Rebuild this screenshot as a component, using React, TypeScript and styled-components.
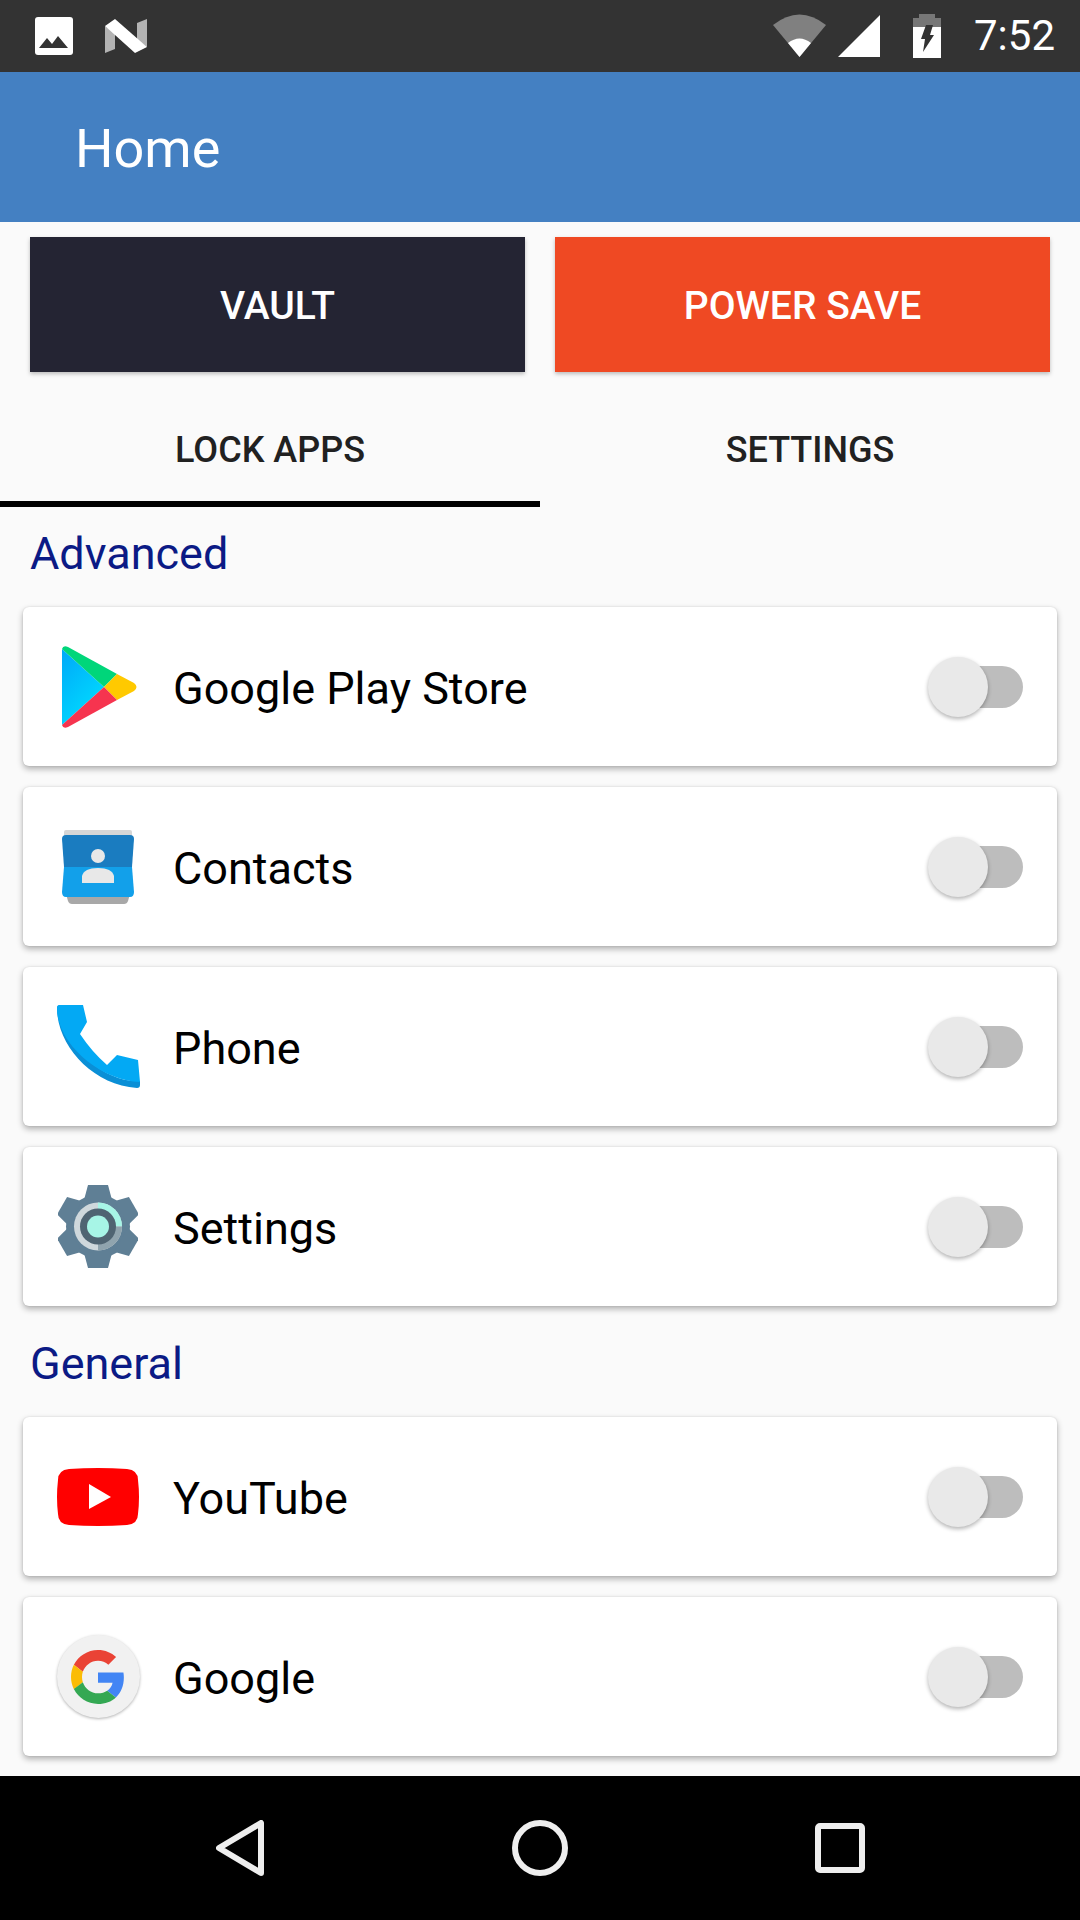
import React from "react";
import styled, { createGlobalStyle } from "styled-components";

const GlobalStyle = createGlobalStyle`
  html, body {
    margin: 0;
    padding: 0;
    background: #fafafa;
    font-family: Roboto, "Liberation Sans", sans-serif;
  }
`;

const Page = styled.div`
  width: 1080px;
  height: 1920px;
  display: flex;
  flex-direction: column;
  overflow: hidden;
  background: #fafafa;
`;

const StatusBar = styled.div`
  height: 72px;
  flex: none;
  display: flex;
  align-items: center;
  justify-content: space-between;
  padding: 0 25px 0 35px;
  background: #333333;
`;

const StatusGroup = styled.div<{ $gap: number }>`
  display: flex;
  align-items: center;
  gap: ${(props) => props.$gap}px;
`;

const Clock = styled.span`
  color: #fff;
  font-size: 42px;
  line-height: 72px;
`;

const AppBar = styled.div`
  height: 150px;
  flex: none;
  display: flex;
  align-items: center;
  padding: 3px 0 0 75px;
  box-sizing: border-box;
  background: #4480c2;
`;

const AppTitle = styled.h1`
  margin: 0;
  color: #fff;
  font-size: 54px;
  font-weight: 400;
`;

const ActionRow = styled.div`
  display: grid;
  grid-template-columns: 1fr 1fr;
  gap: 30px;
  padding: 15px 30px 0;
`;

const ActionButton = styled.div<{ $bg: string }>`
  height: 135px;
  display: flex;
  align-items: center;
  justify-content: center;
  padding-top: 3px;
  box-sizing: border-box;
  color: #fff;
  font-size: 39px;
  font-weight: 500;
  background: ${(props) => props.$bg};
  box-shadow: 0 2px 4px rgba(0, 0, 0, 0.25);
`;

const Tabs = styled.div`
  display: grid;
  grid-template-columns: 1fr 1fr;
  height: 135px;
`;

const Tab = styled.div<{ $active?: boolean }>`
  display: flex;
  align-items: center;
  justify-content: center;
  padding-top: 27px;
  color: #212121;
  font-size: 36px;
  font-weight: 500;
  border-bottom: 6px solid ${(props) => (props.$active ? "#000" : "transparent")};
`;

const Section = styled.section`
  padding: 0 23px;
  & + & {
    margin-top: 11px;
  }
`;

const SectionTitle = styled.h2`
  margin: 0 0 8px 7px;
  height: 92px;
  line-height: 94px;
  color: #0b1a85;
  font-size: 45px;
  font-weight: 400;
`;

const CardList = styled.div`
  display: flex;
  flex-direction: column;
  gap: 21px;
`;

const Card = styled.div`
  height: 159px;
  display: flex;
  align-items: center;
  padding: 0 34px 0 33px;
  border-radius: 6px;
  background: #fff;
  box-shadow: 0 3px 6px rgba(0, 0, 0, 0.3), 0 0 2px rgba(0, 0, 0, 0.12);
`;

const IconSlot = styled.div`
  width: 84px;
  height: 86px;
  flex: none;
  display: flex;
  align-items: center;
  justify-content: center;
`;

const AppName = styled.span`
  flex: 1;
  margin-left: 33px;
  padding-top: 4px;
  color: #000;
  font-size: 45px;
`;

const Switch = styled.div`
  position: relative;
  width: 95px;
  height: 60px;
  display: flex;
  align-items: center;
  justify-content: flex-end;
`;

const Track = styled.div`
  width: 73px;
  height: 42px;
  border-radius: 21px;
  background: #bdbdbd;
`;

const Thumb = styled.div`
  position: absolute;
  top: 0;
  left: 0;
  width: 60px;
  height: 60px;
  border-radius: 50%;
  background: #e9e9e9;
  box-shadow: 0 2px 4px rgba(0, 0, 0, 0.3);
`;

const NavBar = styled.div`
  margin-top: auto;
  height: 144px;
  flex: none;
  display: grid;
  grid-template-columns: repeat(3, 300px);
  justify-content: center;
  align-items: center;
  background: #000;
`;

const NavItem = styled.div`
  display: flex;
  justify-content: center;
  align-items: center;
`;

const GoogleBadge = styled.div`
  width: 83px;
  height: 83px;
  display: flex;
  align-items: center;
  justify-content: center;
  border-radius: 50%;
  background: #f1f1f1;
  box-shadow: 0 1px 3px rgba(0, 0, 0, 0.3);
`;

const PictureIcon = () => (
  <svg width="38" height="38" viewBox="0 0 38 38">
    <rect width="38" height="38" rx="3" fill="#fff" />
    <path d="M4 31 L12 21 L17 27 L23 19 L33 31Z" fill="#333" />
  </svg>
);

const NougatLogo = () => (
  <svg width="44" height="36" viewBox="0 0 44 36">
    <path d="M1 8 L11 15 V31 L1 35Z" fill="#b3b3b3" />
    <path d="M43 1 V29 L33 22 V5Z" fill="#b3b3b3" />
    <path d="M11 1 L43 29 L31 35 L1 8Z" fill="#fff" />
  </svg>
);

const WifiIcon = () => (
  <svg width="53" height="44" viewBox="0 0 53 44">
    <path d="M0 11 Q26.5 -10 53 11 L26.5 43Z" fill="#808080" />
    <path d="M15 29 Q26.5 20 38 29 L26.5 43Z" fill="#fff" />
  </svg>
);

const SignalIcon = () => (
  <svg width="42" height="44" viewBox="0 0 42 44">
    <path d="M0 43 L42 1 V43Z" fill="#fff" />
  </svg>
);

const BatteryIcon = () => (
  <svg width="28" height="44" viewBox="0 0 28 44">
    <path d="M6 0 H22 V4 H28 V13 H0 V4 H6Z" fill="#777" />
    <path d="M0 13 H28 V44 H0Z" fill="#fff" />
    <path d="M13 11 H20 L17 21 H21 L10 38 L12 25 H8Z" fill="#333" />
  </svg>
);

const PlayStoreIcon = () => (
  <svg width="78" height="82" viewBox="-3 0 78 82">
    <defs>
      <linearGradient id="playBlue" x1="0" y1="0" x2="0.6" y2="1">
        <stop offset="0" stopColor="#00a8f8" />
        <stop offset="1" stopColor="#00dcff" />
      </linearGradient>
    </defs>
    <path d="M0 3 L42 41 L0 79Z" fill="url(#playBlue)" />
    <path d="M0 3 Q1 -1 6 1 L55 28 L42 41Z" fill="#00d67a" />
    <path d="M55 28 L72 37 Q77 41 72 45 L55 54 L42 41Z" fill="#ffc900" />
    <path d="M42 41 L55 54 L6 81 Q1 83 0 79Z" fill="#f6344f" />
  </svg>
);

const ContactsIcon = () => (
  <svg width="72" height="74" viewBox="0 0 72 74">
    <path d="M4 0 H68 Q70 0 70 2 V10 H2 V2 Q2 0 4 0Z" fill="#d6d6d6" />
    <path d="M4 64 H68 L66 71 Q65 74 62 74 H10 Q7 74 6 71Z" fill="#a8a8a8" />
    <path d="M4 5 H68 Q72 5 72 9 L70 37 H2 L0 9 Q0 5 4 5Z" fill="#1a7cc0" />
    <path d="M2 37 H70 L72 62 Q72 67 68 67 H4 Q0 67 0 62Z" fill="#12a0ea" />
    <circle cx="36" cy="26" r="7" fill="#e8e8e8" />
    <path d="M20 53 V46 Q22 38 36 38 Q50 38 52 46 V53Z" fill="#e8e8e8" />
  </svg>
);

const PhoneIcon = () => (
  <svg width="83" height="83" viewBox="0 0 83 83">
    <path d="M0 3 Q0 0 3 0 H4 C4 38 45 78 83 76 V80 Q83 83 80 83 C35 80 0 40 0 3Z" fill="#0a8fd6" />
    <path d="M0 3 Q0 0 3 0 H26 L30 17 L23 29 Q35 47 50 60 L60 50 L81 55 L83 77 C45 76 0 40 0 3Z" fill="#03a9f4" />
  </svg>
);

const SettingsIcon = () => (
  <svg width="80" height="85" viewBox="0 0 80 85">
    <g fill="#5f7f95">
      <circle cx="40" cy="42.5" r="32" />
      {[0, 60, 120, 180, 240, 300].map((angle) => (
        <path key={angle} d="M30 1 H50 L54 16 H26Z" transform={`rotate(${angle} 40 42.5)`} />
      ))}
    </g>
    <circle cx="40" cy="42.5" r="24" fill="#cfd8dc" />
    <path d="M40 42.5 V18.5 A24 24 0 0 1 64 42.5Z" fill="#a7f5e6" />
    <path d="M40 42.5 H64 A24 24 0 0 1 40 66.5Z" fill="#90a4ae" />
    <circle cx="40" cy="42.5" r="18" fill="#4f6472" />
    <circle cx="40" cy="42.5" r="11" fill="#a7f5e6" />
  </svg>
);

const YouTubeIcon = () => (
  <svg width="82" height="58" viewBox="0 0 82 58">
    <path d="M12 1 Q41 -1 70 1 Q81 2 81 12 Q83 29 81 46 Q81 56 70 57 Q41 59 12 57 Q1 56 1 46 Q-1 29 1 12 Q1 2 12 1Z" fill="#f00" />
    <path d="M32 16 L54 29 L32 41Z" fill="#fff" />
  </svg>
);

const GoogleIcon = () => (
  <GoogleBadge>
    <svg width="54" height="54" viewBox="0 0 48 48">
      <path fill="#EA4335" d="M24 9.5c3.54 0 6.71 1.22 9.21 3.6l6.85-6.85C35.9 2.38 30.47 0 24 0 14.62 0 6.51 5.38 2.56 13.22l7.98 6.19C12.43 13.72 17.74 9.5 24 9.5z" />
      <path fill="#4285F4" d="M46.98 24.55c0-1.57-.15-3.09-.38-4.55H24v9.02h12.94c-.58 2.96-2.26 5.48-4.78 7.18l7.73 6c4.51-4.18 7.09-10.36 7.09-17.65z" />
      <path fill="#FBBC05" d="M10.53 28.59c-.48-1.45-.76-2.99-.76-4.59s.27-3.14.76-4.59l-7.98-6.19C.92 16.46 0 20.12 0 24c0 3.88.92 7.54 2.56 10.78l7.97-6.19z" />
      <path fill="#34A853" d="M24 48c6.48 0 11.93-2.13 15.89-5.81l-7.73-6c-2.15 1.45-4.92 2.3-8.16 2.3-6.26 0-11.57-4.22-13.47-9.91l-7.98 6.19C6.51 42.62 14.62 48 24 48z" />
    </svg>
  </GoogleBadge>
);

const BackIcon = () => (
  <svg width="48" height="56" viewBox="0 0 48 56">
    <path d="M45 3 V53 L3 28Z" fill="none" stroke="#eee" strokeWidth="6" strokeLinejoin="round" />
  </svg>
);

const HomeIcon = () => (
  <svg width="56" height="56" viewBox="0 0 56 56">
    <circle cx="28" cy="28" r="25" fill="none" stroke="#eee" strokeWidth="6" />
  </svg>
);

const RecentsIcon = () => (
  <svg width="50" height="50" viewBox="0 0 50 50">
    <rect x="3" y="3" width="44" height="44" rx="2" fill="none" stroke="#eee" strokeWidth="6" />
  </svg>
);

const advanced = [
  { name: "Google Play Store", icon: <PlayStoreIcon /> },
  { name: "Contacts", icon: <ContactsIcon /> },
  { name: "Phone", icon: <PhoneIcon /> },
  { name: "Settings", icon: <SettingsIcon /> },
];

const general = [
  { name: "YouTube", icon: <YouTubeIcon /> },
  { name: "Google", icon: <GoogleIcon /> },
];

type AppItem = { name: string; icon: React.ReactNode };

function AppCards({ items }: { items: AppItem[] }) {
  return (
    <CardList>
      {items.map((item) => (
        <Card key={item.name}>
          <IconSlot>{item.icon}</IconSlot>
          <AppName>{item.name}</AppName>
          <Switch>
            <Track />
            <Thumb />
          </Switch>
        </Card>
      ))}
    </CardList>
  );
}

export default function App() {
  return (
    <Page>
      <GlobalStyle />
      <StatusBar>
        <StatusGroup $gap={31}>
          <PictureIcon />
          <NougatLogo />
        </StatusGroup>
        <StatusGroup $gap={33}>
          <StatusGroup $gap={12}>
            <WifiIcon />
            <SignalIcon />
          </StatusGroup>
          <BatteryIcon />
          <Clock>7:52</Clock>
        </StatusGroup>
      </StatusBar>
      <AppBar>
        <AppTitle>Home</AppTitle>
      </AppBar>
      <ActionRow>
        <ActionButton $bg="#242433">VAULT</ActionButton>
        <ActionButton $bg="#ef4923">POWER SAVE</ActionButton>
      </ActionRow>
      <Tabs>
        <Tab $active>LOCK APPS</Tab>
        <Tab>SETTINGS</Tab>
      </Tabs>
      <Section>
        <SectionTitle>Advanced</SectionTitle>
        <AppCards items={advanced} />
      </Section>
      <Section>
        <SectionTitle>General</SectionTitle>
        <AppCards items={general} />
      </Section>
      <NavBar>
        <NavItem>
          <BackIcon />
        </NavItem>
        <NavItem>
          <HomeIcon />
        </NavItem>
        <NavItem>
          <RecentsIcon />
        </NavItem>
      </NavBar>
    </Page>
  );
}
